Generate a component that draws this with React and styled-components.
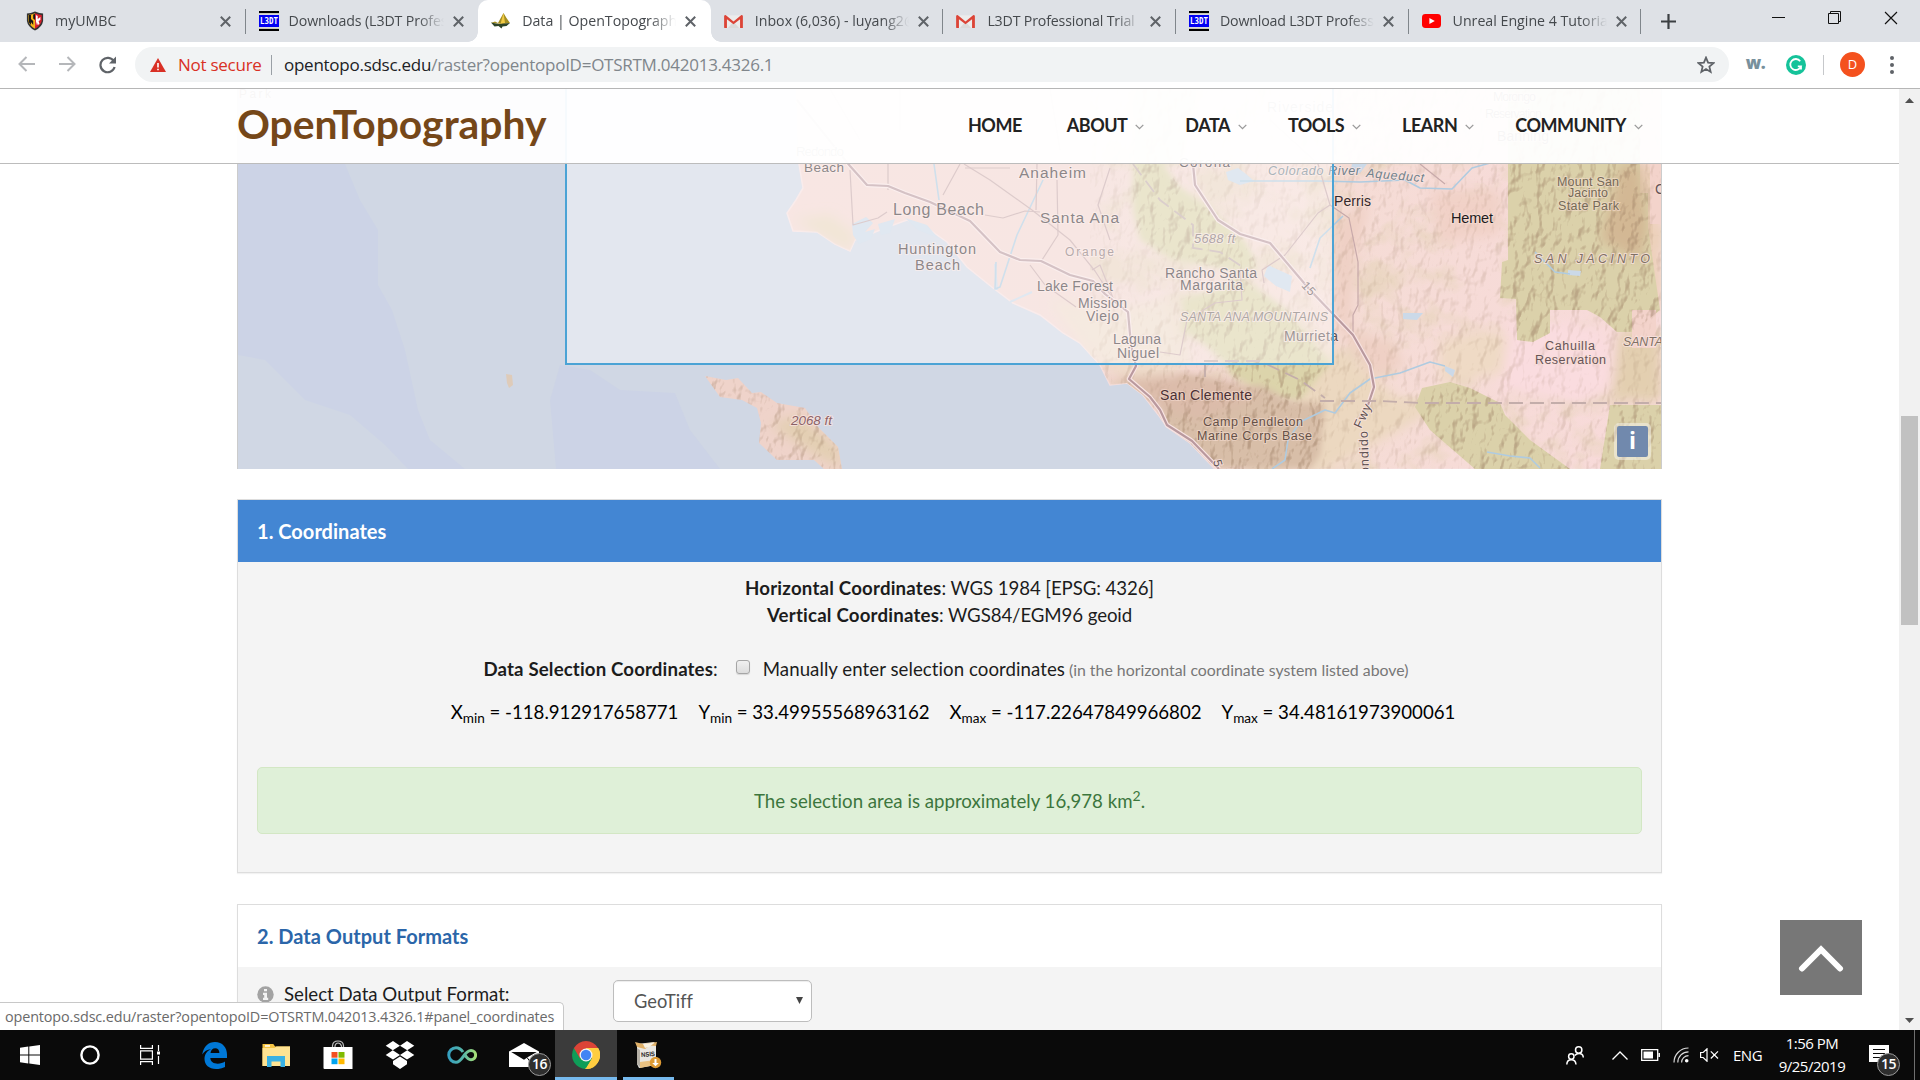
import React from "react";
import styled, { createGlobalStyle, css } from "styled-components";

const ui = '"Open Sans", "Noto Sans", sans-serif';
const lato = 'Lato, "Open Sans", sans-serif';

const GlobalStyle = createGlobalStyle`
  *, *::before, *::after { box-sizing: border-box; }
  body { margin: 0; background: #fff; overflow: hidden; }
  svg { display: block; flex: none; }
`;

const Screen = styled.div`
  display: flex;
  flex-direction: column;
  width: 1920px;
  height: 1080px;
  overflow: hidden;
  font-family: ${ui};
`;

/* ---------- browser tabs ---------- */

const TabStrip = styled.div`
  display: flex;
  height: 42px;
  padding-left: 13px;
  background: #dee1e6;
`;

const flare = css`
  content: "";
  position: absolute;
  bottom: 0;
  width: 10px;
  height: 10px;
`;

const Tab = styled.div`
  position: relative;
  display: flex;
  align-items: center;
  width: 232.6px;
  padding: 0 14.5px 0 13px;
  color: #45494d;
  ${(p) =>
    p.$active &&
    css`
      background: #fff;
      border-radius: 10px 10px 0 0;
      &::before {
        ${flare}
        left: -10px;
        background: radial-gradient(circle at 0 0, transparent 9.5px, #fff 10px);
      }
      &::after {
        ${flare}
        right: -10px;
        background: radial-gradient(circle at 100% 0, transparent 9.5px, #fff 10px);
      }
    `}
`;

const TabDivider = styled.span`
  position: absolute;
  right: 0;
  top: 9px;
  width: 1px;
  height: 25px;
  background: #80868b;
`;

const TabTitle = styled.span`
  flex: 1;
  margin: 0 9px 1px ${(p) => p.$indent || 10}px;
  overflow: hidden;
  white-space: nowrap;
  font-size: 14.2px;
  line-height: 22px;
  letter-spacing: ${(p) => p.$spacing || 0}px;
  mask-image: linear-gradient(to right, #000 calc(100% - 26px), transparent);
`;

const NewTab = styled.div`
  display: flex;
  align-items: center;
  margin-left: 20px;
`;

const WindowControls = styled.div`
  display: flex;
  align-items: flex-start;
  gap: 43px;
  margin-left: auto;
  padding: 11px 22px 0 0;
`;

/* ---------- toolbar ---------- */

const Toolbar = styled.div`
  display: flex;
  align-items: center;
  height: 47px;
  padding: 0 26px 1px 18px;
  background: #fff;
  border-bottom: 1px solid #b6b6b6;
`;

const NavButtons = styled.div`
  display: flex;
  gap: 22px;
  margin-right: 18px;
`;

const AddressBar = styled.div`
  display: flex;
  align-items: center;
  width: 1594px;
  height: 35px;
  padding: 0 14px 0 15px;
  border-radius: 18px;
  background: #f1f3f4;
  font-size: 17px;
  letter-spacing: -0.26px;
  white-space: nowrap;
`;

const NotSecure = styled.span`
  width: 93px;
  margin-left: 12px;
  color: #d93025;
`;

const AddressDivider = styled.span`
  width: 1px;
  height: 20px;
  margin-right: 12px;
  background: #9aa0a6;
`;

const Url = styled.span`
  flex: 1;
  color: #80868b;
  b {
    color: #202124;
    font-weight: 400;
  }
`;

const Extensions = styled.div`
  display: flex;
  align-items: center;
  margin-left: auto;
`;

const WordMark = styled.span`
  margin: -5px 21px 0 0;
  color: #78909c;
  font: 800 17px ${ui};
  letter-spacing: -0.6px;
`;

const GrammarDivider = styled.span`
  width: 1px;
  height: 20px;
  margin: 0 16px 0 17px;
  background: #c6c8cb;
`;

const Avatar = styled.span`
  width: 25px;
  height: 25px;
  margin-right: 25px;
  border-radius: 50%;
  background: #f4511e;
  color: #fff;
  font-size: 13px;
  line-height: 25px;
  text-align: center;
`;

/* ---------- page ---------- */

const Viewport = styled.div`
  position: relative;
  display: flex;
  flex: 1;
  min-height: 0;
`;

const Page = styled.main`
  position: relative;
  flex: 1;
  overflow: hidden;
  background: #fff;
  font-family: ${lato};
  font-variant-ligatures: none;
  color: #1c1c1c;
`;

const SiteHeader = styled.header`
  position: absolute;
  top: 0;
  left: 0;
  right: 0;
  z-index: 2;
  height: 75px;
  border-bottom: 1px solid #bcbcbc;
  background: rgba(255, 255, 255, 0.95);
`;

const HeaderInner = styled.div`
  display: flex;
  align-items: center;
  justify-content: space-between;
  width: 1425px;
  height: 72px;
  margin: 0 auto;
`;

const Logo = styled.span`
  margin-bottom: 2px;
  color: #754719;
  font-size: 40.8px;
  font-weight: 700;
  line-height: 50px;
`;

const Menu = styled.nav`
  display: flex;
  margin-right: 19px;
`;

const MenuItem = styled.span`
  display: flex;
  align-items: center;
  margin-left: ${(p) => p.$before || 41}px;
  color: #222;
  font-size: 18px;
  font-weight: 700;
  line-height: 24px;
  letter-spacing: -0.5px;
  svg {
    margin: 3px 0 0 8px;
  }
`;

const Container = styled.div`
  width: 1425px;
  margin: 0 auto;
`;

const MapFrame = styled.div`
  position: relative;
  height: 380px;
  margin-bottom: 30px;
  border: solid #ccc;
  border-width: 0 1px;
  overflow: hidden;
`;

const InfoButton = styled.span`
  position: absolute;
  right: 10px;
  bottom: 9px;
  width: 37px;
  height: 37px;
  border: 3.5px solid rgba(255, 255, 255, 0.4);
  border-radius: 5px;
  background: #7189ad;
  background-clip: padding-box;
  color: #fff;
  font: 700 23px/28px ${ui};
  text-align: center;
`;

const Panel = styled.section`
  margin-bottom: 31px;
  border: 1px solid #ddd;
  box-shadow: 0 1px 1px rgba(0, 0, 0, 0.05);
  background: #f4f4f4;
`;

const PanelHeader = styled.h2`
  display: flex;
  align-items: center;
  height: 62px;
  margin: 0;
  padding: 0 19px;
  background: ${(p) => (p.$active ? "#4386d3" : "#fff")};
  color: ${(p) => (p.$active ? "#fff" : "#2b66a9")};
  font-size: 20px;
  font-weight: 700;
  letter-spacing: 0.03px;
`;

const CoordinatesBody = styled.div`
  height: 310px;
  padding: 13px 19px 0;
  font-size: 18.67px;
  line-height: 27px;
  text-align: center;
  white-space: nowrap;
`;

const Line = styled.div`
  height: 27px;
  letter-spacing: -0.1px;
`;

const Term = styled.b`
  letter-spacing: ${(p) => p.$spacing}px;
`;

const SelectionLine = styled.label`
  display: flex;
  justify-content: center;
  height: 27px;
  margin: 27px 7px 16px 0;
  letter-spacing: 0.05px;
`;

const Checkbox = styled.span`
  width: 14px;
  height: 14px;
  margin: 4px 13px 0 18px;
  border: 1px solid #a5a5a5;
  border-radius: 3px;
  background: linear-gradient(#f0f0f0, #dcdcdc);
  box-shadow: 0 1px 1px rgba(0, 0, 0, 0.12);
`;

const Hint = styled.small`
  margin-left: 4px;
  color: #777;
  font-size: 15.87px;
  letter-spacing: 0;
`;

const Bounds = styled.div`
  display: flex;
  justify-content: center;
  gap: 20px;
  height: 27px;
  margin: 0 0 41px 7px;
  color: #000;
  letter-spacing: -0.02px;
  sub {
    font-size: 13.6px;
    line-height: 0;
    vertical-align: -3.5px;
  }
`;

const Alert = styled.div`
  height: 67px;
  padding-top: 20px;
  border: 1px solid #d3e7c4;
  border-radius: 5px;
  background: #dff0d8;
  color: #3c763d;
  sup {
    font-size: 14px;
    line-height: 0;
    vertical-align: 7px;
  }
`;

const FormatRow = styled.div`
  display: flex;
  align-items: flex-start;
  height: 80px;
  padding: 13px 0 0 19px;
  font-size: 18.67px;
  svg {
    margin-top: 6px;
  }
`;

const FormatLabel = styled.span`
  width: 329px;
  margin: 1px 0 0 10px;
  line-height: 27px;
`;

const Select = styled.div`
  display: flex;
  align-items: center;
  justify-content: space-between;
  width: 199px;
  height: 42px;
  padding: 0 8px 1px 20px;
  border: 1px solid #bdbdbd;
  border-radius: 5px;
  background: #fff;
  box-shadow: inset 0 1px 1px rgba(0, 0, 0, 0.075);
  color: #555;
  font-size: 18.3px;
  svg {
    margin: 0;
  }
`;

const BackToTop = styled.div`
  position: absolute;
  left: 1780px;
  top: 831px;
  display: flex;
  align-items: center;
  justify-content: center;
  width: 82px;
  height: 75px;
  padding-top: 3px;
  background: #777;
`;

const StatusBubble = styled.div`
  position: absolute;
  left: 0;
  bottom: 0;
  z-index: 3;
  width: 564px;
  height: 28px;
  padding-left: 5px;
  border: solid #c8c8c8;
  border-width: 1px 1px 0 0;
  border-radius: 0 5px 0 0;
  background: #fff;
  color: #6a6a6a;
  font: 14.4px/27px ${ui};
  letter-spacing: -0.13px;
  white-space: nowrap;
`;

const Scrollbar = styled.div`
  display: flex;
  flex-direction: column;
  align-items: center;
  width: 21px;
  padding: 9px 0 7px;
  background: #f1f1f1;
`;

const Thumb = styled.div`
  width: 17px;
  height: 209px;
  margin: 313px 0 auto;
  background: #c1c1c1;
`;

/* ---------- taskbar ---------- */

const Taskbar = styled.footer`
  display: flex;
  height: 50px;
  background: #0a0a0a;
  color: #fff;
`;

const SystemButtons = styled.div`
  display: flex;
  margin-right: 3px;
`;

const TaskButton = styled.div`
  display: flex;
  align-items: center;
  justify-content: center;
  position: relative;
  width: ${(p) => p.$width || 62}px;
  padding-bottom: ${(p) => p.$lift || 0}px;
  background: ${(p) => (p.$active ? "#3b3b3b" : "transparent")};
  &::after {
    content: "";
    display: ${(p) => (p.$running ? "block" : "none")};
    position: absolute;
    bottom: 0;
    left: ${(p) => (p.$active ? 0 : 6)}px;
    right: ${(p) => (p.$active ? 0 : 5)}px;
    height: 3px;
    background: #76b9ed;
  }
`;

const Badge = styled.span`
  position: absolute;
  left: ${(p) => p.$x}px;
  top: ${(p) => p.$y}px;
  width: 23px;
  height: 23px;
  border: 1px solid #9a9a9a;
  border-radius: 50%;
  background: #2e2e2e;
  font-size: 14px;
  font-weight: 600;
  letter-spacing: -0.5px;
  line-height: 20px;
  text-align: center;
`;

const Tray = styled.div`
  display: flex;
  align-items: center;
  width: 354px;
  margin-left: auto;
`;

const TrayIcon = styled.span`
  margin-right: ${(p) => p.$after}px;
`;

const Language = styled.span`
  width: 41px;
  font-size: 15px;
  letter-spacing: -0.5px;
`;

const Clock = styled.span`
  width: 76px;
  margin-right: 19px;
  font-size: 15px;
  line-height: 23.5px;
  letter-spacing: -0.5px;
  text-align: center;
`;

const Notifications = styled.span`
  position: relative;
  align-self: stretch;
  width: 46px;
  padding-top: 15px;
  border-right: 1px solid #6f6f6f;
`;

/* ---------- icons ---------- */

const Cross = ({ size = 11, color = "#5f6368", w = 2 }) => (
  <svg width={size} height={size} viewBox="0 0 11 11" stroke={color} strokeWidth={w} fill="none">
    <path d="M.8.8l9.4 9.4M10.2.8L.8 10.2" />
  </svg>
);

const ShieldIcon = () => (
  <svg width="18" height="20" viewBox="0 0 20 20" preserveAspectRatio="none">
    <path d="M1 2.5Q5 2.5 10 .6 15 2.5 19 2.5V10Q18 16 10 19.6 2 16 1 10Z" fill="#333" />
    <path d="M2.5 4Q6 4 10 2.3V17.8Q4 15 2.5 10Z" fill="#f5b51a" />
    <path d="M10 2.3Q14 4 17.5 4V10Q16 15 10 17.8Z" fill="#d61f2c" />
    <path d="M3 4h2.500v4L8 10v4L5.500 11v3L3 11zM8 3.500v4L10 9V3z" fill="#151515" />
    <path d="M11 4l2 1v3l3-2v3l-2 1 1 3-2 1-1-3-1 4z" fill="#fff" />
  </svg>
);

const L3dtText = styled.text`
  font: 700 9px "DejaVu Sans Mono", monospace;
`;

const L3dtIcon = () => (
  <svg width="20" height="20" viewBox="0 0 20 20">
    <path d="M0 0h20v2H0zM0 18h20v2H0z" fill="#000" />
    <path d="M0 2h20v1.200H0zM0 16.800h20V18H0z" fill="#c9c9b8" />
    <path d="M0 4h20v12H0z" fill="#0202f2" />
    <L3dtText x="1" y="13.4" fill="#fff" textLength="18" lengthAdjust="spacingAndGlyphs">L3DT</L3dtText>
  </svg>
);

const TopoIcon = () => (
  <svg width="20" height="16" viewBox="0 0 20 16">
    <path d="M0 10l4-1.500 3 1.500 5.500-10 3 5 3.500 5-7 1z" fill="#a58f22" />
    <path d="M12.500 0l-3 11 4.500-1z" fill="#f2cb45" />
    <path d="M0 9.500l5 1 3 .5 11-1-3.500 3-4 .5-1 2-3-2.500-4 .5z" fill="#2d4328" />
  </svg>
);

const GmailIcon = () => (
  <svg width="19" height="15" viewBox="0 0 20 16">
    <path d="M1 1.500h18V15H1z" fill="#ececec" />
    <path d="M4 15l6-7 6 7z" fill="#dadada" />
    <path d="M0 2.500Q0 1 1.600 1L10 8l8.400-7Q20 1 20 2.500V15h-3V5.500L10 11 3 5.500V15H1Q0 15 0 14z" fill="#dc4437" />
  </svg>
);

const YoutubeIcon = () => (
  <svg width="19" height="14" viewBox="0 0 19 14">
    <rect width="19" height="14" rx="3.4" fill="#f00" />
    <path d="M7.400 4v6l5.400-3z" fill="#fff" />
  </svg>
);

const ArrowIcon = ({ flip }) => (
  <svg width="18" height="16" viewBox="0 0 18 16" fill="none" stroke="#b5b7ba" strokeWidth="2">
    <path d={flip ? "M1 8h15M9.500 1l7 7-7 7" : "M17 8H2M8.500 1l-7 7 7 7"} />
  </svg>
);

const ReloadIcon = () => (
  <svg width="19" height="18" viewBox="0 0 19 18">
    <path d="M15.800 5.200A7.200 7.200 0 1 0 16.600 11" fill="none" stroke="#5f6368" strokeWidth="2.2" />
    <path d="M18 .5v7h-7z" fill="#5f6368" />
  </svg>
);

const WarningIcon = () => (
  <svg width="16" height="14" viewBox="0 0 16 14">
    <path d="M8 0l8 14H0z" fill="#d93025" />
    <path d="M7.200 5h1.600v4.500H7.200zM7.200 10.700h1.600v1.600H7.200z" fill="#fff" />
  </svg>
);

const StarIcon = () => (
  <svg width="18" height="18" viewBox="0 0 24 24" fill="none" stroke="#5f6368" strokeWidth="2.4">
    <path d="M12 2.200l2.800 6.700 7.200.6-5.500 4.700 1.700 7L12 17.400l-6.200 3.800 1.700-7L2 9.500l7.200-.6z" />
  </svg>
);

const GrammarlyIcon = () => (
  <svg width="20" height="20" viewBox="0 0 20 20">
    <circle cx="10" cy="10" r="10" fill="#15c39a" />
    <path d="M14.200 6.200A5.500 5.500 0 1 0 15 11.300h-3.200M15 11v3.600" fill="none" stroke="#fff" strokeWidth="1.8" />
  </svg>
);

const Chevron = () => (
  <svg width="9" height="6" viewBox="0 0 9 6" fill="none" stroke="#9a9a9a" strokeWidth="1.3">
    <path d="M.7.9l3.800 3.800L8.300.9" />
  </svg>
);

const WindowsIcon = () => (
  <svg width="20" height="20" viewBox="0 0 20 20" fill="#fff">
    <path d="M0 2.700l8.300-1.100v7.800H0zM9.300 1.400L20 0v9.400H9.300zM0 10.500h8.300v7.900L0 17.300zM9.300 10.500H20V20L9.300 18.500z" />
  </svg>
);

const TaskViewIcon = () => (
  <svg width="20" height="20" viewBox="0 0 20 20" fill="none" stroke="#fff" strokeWidth="1.2">
    <path d="M.6 0v3.400h11.800V0M.6 5.800h11.800v8.400H.6zM.6 20v-3.400h11.800V20M18.500 0v6M18.500 11v8" />
    <path d="M17 6.500h3v3h-3z" fill="#fff" stroke="none" />
  </svg>
);

const EdgeIcon = () => (
  <svg width="25" height="27" viewBox="0 0 25 27">
    <path
      d="M.2 12.500C1.500 4.500 6.500 0 13 0c7.500 0 12 5.500 12 12.500V16H8.300c.2 3.800 3.500 5.700 7.400 5.700 2.800 0 5.200-.8 7.300-2.100v5.500A17 17 0 0 1 14 27C7 27 2.500 22.800 2.500 17c0-4.700 2.600-8.300 6.500-9.800C5 7.300 2.200 9.500.2 12.500zM8.500 11h8.900c0-3-1.500-4.700-4.200-4.700-2.600 0-4.300 1.900-4.700 4.700z"
      fill="#0078d7"
      fillRule="evenodd"
    />
  </svg>
);

const ExplorerIcon = () => (
  <svg width="28" height="23" viewBox="0 0 28 23">
    <path d="M.5 0h10.800l1.800 2.500H28V22H.5z" fill="#f5c443" />
    <path d="M.5 4h12l2-1.500H28V22H.5z" fill="#ffe392" />
    <path d="M3 1.200h5v1.500H3z" fill="#fff" />
    <path d="M5 12h18v11h-4.500v-5.500h-9V23H5z" fill="#3ab1e3" />
  </svg>
);

const StoreIcon = () => (
  <svg width="30" height="29" viewBox="0 0 30 29">
    <path d="M9.500 8V5.500Q10 1 15 1t5.500 4.500V8M12 8V6q.5-3 3-3t3.500 3v2" fill="none" stroke="#bbb" strokeWidth="1.2" />
    <path d="M.5 7h29v22h-28Q.5 29 .5 28z" fill="#fff" />
    <path d="M8.500 12h6v5.700h-6z" fill="#f25022" />
    <path d="M15.500 12h6v5.700h-6z" fill="#7fba00" />
    <path d="M8.500 18.500h6v5.700h-6z" fill="#00a4ef" />
    <path d="M15.500 18.500h6v5.700h-6z" fill="#ffb900" />
  </svg>
);

const DropboxIcon = () => (
  <svg width="30" height="28" viewBox="0 0 30 28" fill="#fff">
    <path d="M8 0l7 4.700-7.200 4.600L.7 4.800zM22 0l7.300 4.800-7.100 4.500L15 4.700zM7.800 9.300L15 14l-7 4.500L.7 14zM22.200 9.300l7.100 4.700-7.300 4.500-7-4.500zM15 15.500l7 4.500v3.200L15 28l-7-4.800V20z" />
  </svg>
);

const InfinityIcon = () => (
  <svg width="30" height="18" viewBox="0 0 30 18" fill="none" strokeWidth="3">
    <defs>
      <linearGradient id="loop" x1="0" x2="1">
        <stop offset="0" stopColor="#359fbf" />
        <stop offset=".55" stopColor="#58b7a7" />
        <stop offset="1" stopColor="#a5df77" />
      </linearGradient>
    </defs>
    <path d="M16 6C14 3 12 1.700 9 1.700a7.200 7.200 0 0 0 0 14.500C15.500 16.200 17 4.500 24 4.500a4.600 4.600 0 0 1 0 9.200c-3.500 0-5-3-6-4.700" stroke="url(#loop)" />
  </svg>
);

const MailIcon = () => (
  <svg width="30" height="25" viewBox="0 0 30 25" fill="#fff">
    <path d="M0 8.500L15 0l15 8.500V24H0z" />
    <path d="M2.200 9h25.600L19 14l-4 2.800z" fill="#0a0a0a" />
    <path d="M18 14.500l6 8" stroke="#0a0a0a" />
  </svg>
);

const ChromeIcon = () => (
  <svg width="28" height="28" viewBox="0 0 28 28">
    <path d="M14 14L1.900 7A14 14 0 0 1 26.100 7z" fill="#db4437" />
    <path d="M14 14L14 28A14 14 0 0 1 1.900 7z" fill="#0f9d58" />
    <path d="M14 7h12.100A14 14 0 0 1 13 28l7-11z" fill="#ffcd40" />
    <path d="M14 7L1.900 7 8 17.500z" fill="#db4437" />
    <path d="M20 17.500L14 28l-6-10.500z" fill="#0f9d58" />
    <path d="M20 17.500L13.500 28A14 14 0 0 0 26.100 7H14z" fill="#ffcd40" />
    <circle cx="14" cy="14" r="6.5" fill="#f4f4f4" />
    <circle cx="14" cy="14" r="5.2" fill="#4285f4" />
  </svg>
);

const BoxText = styled.text`
  font: 700 6.5px "Liberation Sans", sans-serif;
`;

const InstallerIcon = () => (
  <svg width="27" height="28" viewBox="0 0 27 28">
    <path d="M2 3l17-2 2 4v19L4 27 2 23z" fill="#e9e7e2" />
    <path d="M0 1l8 2L22 1l-1 4-6-.5L10 8 2 6z" fill="#e0b169" />
    <path d="M8 3l12-1.500L14 6l-4 1z" fill="#f8f2e4" />
    <path d="M2 7l3 2v17l-3-3z" fill="#b5b0a6" />
    <path d="M5 21l15-2v5L5 27z" fill="#e8c182" />
    <BoxText x="6" y="15.5" fill="#252525" transform="rotate(-5 12 14)" textLength="14" lengthAdjust="spacingAndGlyphs">NSIS</BoxText>
    <circle cx="20.5" cy="21.5" r="5.7" fill="#dd9a34" />
    <path d="M19.500 18h2v4h2.300l-3.300 3.300-3.300-3.300h2.300z" fill="#fff" />
  </svg>
);

const PeopleIcon = () => (
  <svg width="18" height="19" viewBox="0 0 18 19" fill="none" stroke="#fff" strokeWidth="1.5">
    <circle cx="12.7" cy="4" r="3.2" />
    <circle cx="5.3" cy="10.5" r="2.7" />
    <path d="M.8 18.500Q1 13.800 5.300 13.800t4.700 4.700M8.800 9.500Q10.500 7.500 13 7.500q4 0 4.300 4" />
  </svg>
);

/* ---------- map ---------- */

const land =
  "M797 89L799 164 803 188 796 200 787 213 793 231 817 232 835 244 850 251 855 240 868 235 885 228 907 220 927 228 947 242 967 267 993 288 1013 303 1040 315 1063 333 1080 343 1100 365 1110 385 1127 383 1143 395 1160 417 1167 427 1190 443 1215 469H1661V89Z";
const catalina =
  "M705 376L726 380 738 378 752 393 761 392 777 403 805 408 818 427 838 447 842 469H824L814 460 777 460 759 443 761 423 757 408 742 400 720 397Z";
const softForests = [
  "M1133 89H1200L1180 164 1163 164 1180 187 1213 210 1247 243 1257 267 1240 272 1213 267 1173 260 1140 240 1133 210Z",
  "M1183 298L1215 290 1238 275 1262 292 1290 312 1330 363 1300 400 1265 396 1230 375 1225 363 1205 345 1182 330Z",
];
const forests = [
  "M1508 89H1640V193H1648V227L1648 227 1660 310 1633 332H1617L1600 317 1587 310H1550V333L1533 342 1517 340 1516 299 1500 298 1502 262 1508 260Z",
  "M1422 388L1450 382 1470 388 1500 403 1505 415 1530 440 1570 469H1475L1430 430 1415 407Z",
  "M1610 405H1661V469H1600Z",
];
const brownHills =
  "M1170 385L1182 374 1212 380 1240 388 1262 385 1290 402 1325 403 1320 455 1310 469H1218L1190 443 1167 425 1160 405Z";

const roads = [
  "M797 100L850 166 867 185 888 186 905 193 930 202 970 221 1000 252 1020 260 1041 261 1070 275 1093 281 1105 294 1128 312 1131 345 1136 366 1129 379 1150 397 1160 410 1167 425 1192 441 1219 469",
  "M1193 164L1195 185 1218 220 1240 234 1270 243 1310 290 1353 335 1370 365 1374 387 1368 405",
];
const minorRoads = [
  "M964 164L990 180 1032 210 1070 240 1095 271 1115 302",
  "M850 170L853 225 878 218 887 212M965 168H1010M960 164L943 195M985 215L1003 218 1025 211 1040 212M1057 180L1058 235 1042 260M1037 164L1036 210M1110 168L1098 205 1110 240M1030 265L1045 285 1076 307",
  "M1318 164L1330 205 1318 213 1285 255 1262 270 1264 283",
  "M1330 205L1349 218 1358 262 1358 305 1353 315V333",
  "M888 164V190M1160 352L1180 355 1187 320 1215 303 1242 300 1240 270M1113 298L1100 265 1092 270",
  "M1420 164L1445 184M1270 120L1318 164M900 89V130M830 89L860 140M1050 89L1060 150",
];
const rivers = [
  "M1240 181H1320L1360 182 1405 180 1420 188 1452 189 1472 168 1490 163",
  "M1272 469L1285 460 1288 440 1300 422 1325 410 1335 413 1350 393 1370 379 1400 373 1430 362 1445 366",
  "M934 164L939 200M1043 180L1017 235 1000 287 995 289 996 262M1343 216L1320 238 1310 268",
  "M1535 252L1555 272 1570 274M1487 452L1510 456 1530 458 1540 468",
];

const water = "#cbd9e8";

const MapText = styled.text`
  font-family: "Liberation Sans", sans-serif;
  font-size: ${(p) => p.$size || 13.5}px;
  font-style: ${(p) => (p.$italic ? "italic" : "normal")};
  fill: ${(p) => p.$fill || "#5e5152"};
  stroke: ${(p) => p.$halo || "rgba(250,228,225,.75)"};
  stroke-width: 2px;
  paint-order: stroke;
`;

const insideLabels = [
  [804, 172, 40, "Beach", 13.5],
  [1019, 178, 67, "Anaheim", 15.5],
  [893, 215, 91, "Long Beach", 16],
  [1040, 223, 79, "Santa Ana", 15.5],
  [898, 254, 78, "Huntington", 14.5],
  [915, 270, 45, "Beach", 14.5],
  [1165, 278, 92, "Rancho Santa", 14],
  [1180, 290, 63, "Margarita", 14],
  [1037, 291, 76, "Lake Forest", 14],
  [1078, 308, 49, "Mission", 14],
  [1086, 321, 33, "Viejo", 14],
  [1113, 344, 48, "Laguna", 14],
  [1117, 358, 42, "Niguel", 14],
  [1179, 167, 51, "Corona", 13.5],
  [796, 156, 48, "Redondo", 13.5],
  [1267, 112, 66, "Riverside", 14],
];
const outsideLabels = [
  [1334, 206, 37, "Perris", 14, "#33282b"],
  [1451, 223, 42, "Hemet", 14.5, "#211b1d"],
  [1160, 400, 92, "San Clemente", 14, "#4a3034"],
  [1203, 426, 100, "Camp Pendleton", 12.5, "#655147"],
  [1197, 440, 115, "Marine Corps Base", 12.5, "#655147"],
  [1557, 186, 62, "Mount San", 12.5, "#756a57"],
  [1568, 197, 40, "Jacinto", 12.5, "#756a57"],
  [1558, 210, 61, "State Park", 12.5, "#756a57"],
  [1545, 350, 50, "Cahuilla", 12.5, "#665457"],
  [1535, 364, 71, "Reservation", 12.5, "#665457"],
  [1493, 101, 43, "Morongo", 12.5, "#665457"],
  [1485, 118, 57, "Reservation", 12.5, "#665457"],
  [1497, 141, 52, "Banning", 14, "#665457"],
  [1655, 194, 12, "C", 14, "#665457"],
  [239, 98, 32, "Park", 12, "#665457"],
];

const TerrainMap = () => (
  <svg width="1423" height="380" viewBox="238 89 1423 380">
    <defs>
      <clipPath id="landClip"><path d={land + catalina} /></clipPath>
      <clipPath id="hillClip"><path d={softForests.join("") + forests.join("") + catalina + brownHills} /></clipPath>
      <linearGradient id="landTone" x1="0" x2="1">
        <stop offset="0" stopColor="#f3d6d0" />
        <stop offset=".35" stopColor="#f2d6d0" />
        <stop offset=".62" stopColor="#f5dcd5" />
        <stop offset="1" stopColor="#f8dada" />
      </linearGradient>
      <filter id="soft" x="-10%" y="-10%" width="120%" height="120%"><feGaussianBlur stdDeviation="6" /></filter>
      <filter id="edge" x="-5%" y="-5%" width="110%" height="110%"><feGaussianBlur stdDeviation="3" /></filter>
      <filter id="relief" x="0" y="0" width="100%" height="100%" colorInterpolationFilters="sRGB">
        <feTurbulence type="fractalNoise" baseFrequency=".085 .05" numOctaves="3" seed="8" />
        <feColorMatrix values="0 0 0 0 0 0 0 0 0 0 0 0 0 0 0 1 0 0 0 0" />
        <feDiffuseLighting surfaceScale="7" lightingColor="#fff">
          <feDistantLight azimuth="225" elevation="52" />
        </feDiffuseLighting>
        <feColorMatrix values="0 0 0 0 .6 0 0 0 0 .48 0 0 0 0 .38 -1.6 0 0 0 1.1" />
      </filter>
      <filter id="patches" x="0" y="0" width="100%" height="100%" colorInterpolationFilters="sRGB">
        <feTurbulence type="fractalNoise" baseFrequency=".02 .024" numOctaves="4" seed="21" />
        <feColorMatrix values="0 0 0 0 .88 0 0 0 0 .82 0 0 0 0 .69 4 0 0 0 -1.9" />
      </filter>
    </defs>

    <rect x="238" y="89" width="1423" height="380" fill="#d0d7e4" />
    <path d="M238 89H335L345 164 360 200 378 230V285L392 310 405 350 418 410 430 440 465 469H408L385 445 350 415 305 400 265 360 238 355Z" fill="#ccd3e6" />
    <path d="M560 365L590 370 620 390 675 393 690 430 720 469H556L550 400Z" fill="#ccd3e6" />
    <path d={land} fill="url(#landTone)" stroke="#f6dfdf" strokeWidth="1.5" />
    <path d={catalina} fill="#efd3ca" />
    <path d="M506 374l6 1 1 10-4 3-2-5z" fill="#decbb9" />

    <g clipPath="url(#landClip)">
      <rect x="1090" y="89" width="571" height="380" filter="url(#patches)" opacity=".5" />
      <g filter="url(#soft)">
        <path d="M1430 190H1500V235L1440 243Z" fill="#f1d1c7" />
        <path d="M1334 225L1370 200 1355 260 1350 330 1390 340 1405 365 1375 378 1335 325Z" fill="#efd0c5" />
        <path d="M1050 300L1110 310 1170 300 1190 360 1150 400 1090 355Z" fill="#efdccb" />
        <path d="M1330 345L1360 365 1400 400 1450 400 1400 430 1330 469H1300V380Z" fill="#ecd8c0" />
        <path d="M1440 340L1500 330 1520 370 1440 385Z" fill="#efdac5" />
        <path d="M1510 320L1600 325 1620 385 1580 405 1500 390Z" fill="#fadcdf" />
        <path d="M1620 330H1661V400H1610Z" fill="#e3cfb0" />
        <path d="M1640 164H1661V310H1645Z" fill="#ecd0b9" />
        <path d="M795 220L830 215 855 235 850 251Z" fill="#e8d6bb" />
      </g>
      {softForests.map((d) => <path key={d} d={d} fill="#dcd4ab" filter="url(#edge)" />)}
      {forests.map((d) => <path key={d} d={d} fill="#dbd1aa" />)}
      <path d={brownHills} fill="#d8bea8" filter="url(#edge)" />
      <path d="M1110 380L1170 375 1230 382 1260 396 1200 420 1165 410Z" fill="#dcbcaa" filter="url(#soft)" />
      <path d="M1600 240L1620 165 1640 164 1648 230 1640 262Z" fill="#d3b894" filter="url(#soft)" />
      <path d="M1650 164h11v60h-11zM1632 310h24v38h-24z" fill="#f3d3cb" />
      <path d="M770 425L800 415 838 447 842 469 815 455z" fill="#e3cfb2" filter="url(#soft)" />
      <g opacity=".19"><rect x="1090" y="89" width="571" height="380" filter="url(#relief)" /></g>
    </g>
    <g clipPath="url(#hillClip)">
      <g opacity=".34"><rect x="690" y="89" width="971" height="380" filter="url(#relief)" /></g>
    </g>

    <g fill={water}>
      <path d="M1226 172l12-4 8 6 8 7-14 4-12-5zM1268 265l24 11-2 16-14-6-12-10zM1352 164h15l-7 9h-10zM1403 313h20l-6 7-14-1zM1445 366l10 4-2 7-8-6zM1568 270l13 1-1 5-12-1z" />
      <path d="M852 224l14-7 7 6-8 9 10-3-4 10-12 5-6-9zM878 224l17-5-5 14-9 2zM905 218l22 7 11 13-20-8z" />
      <path d="M997 290L995 264M1010 302L1032 292" stroke={water} strokeWidth="2" />
    </g>
    <g fill="none" stroke="#afcbe0" strokeWidth="1.6" strokeLinejoin="round">
      {rivers.map((d) => <path key={d} d={d} />)}
    </g>
    <g fill="none" stroke="#c7a9aa" strokeWidth="1.2" strokeLinejoin="round">
      {minorRoads.map((d) => <path key={d} d={d} />)}
    </g>
    <g fill="none" strokeLinejoin="round">
      {roads.map((d) => <path key={d} d={d} stroke="#f8e4e3" strokeWidth="4.5" />)}
      {roads.map((d) => <path key={d} d={d} stroke="#b9999e" strokeWidth="2.2" />)}
    </g>
    <path d="M1133 164L1160 200 1193 225V248L1220 252 1247 270M1204 361H1260L1300 380 1325 398M1320 401H1380L1420 403H1661M1205 363V380" fill="none" stroke="#c3adaa" strokeWidth="1.8" strokeDasharray="14 7" />

    {insideLabels.map(([x, y, w, t, s]) => (
      <MapText key={t + y} x={x} y={y} textLength={w} $size={s} $fill="#40363a">{t}</MapText>
    ))}
    <MapText x="1065" y="256" textLength="49" $size={12} $fill="#867272">Orange</MapText>
    <MapText x="1194" y="243" textLength="41" $size={13} $italic $fill="#7b6d6c">5688 ft</MapText>
    <MapText x="1180" y="321" textLength="148" $size={12.5} $italic $fill="#796f6a">SANTA ANA MOUNTAINS</MapText>
    <MapText x="1284" y="341" textLength="54" $size={14}>Murrieta</MapText>
    <MapText x="1268" y="175" textLength="92" $size={12.5} $italic $fill="#71818b">Colorado River</MapText>
    <MapText transform="translate(1366 177) rotate(5)" textLength="58" $size={12.5} $italic $fill="#71818b">Aqueduct</MapText>
    <MapText transform="translate(1301 286) rotate(48)" textLength="14" $size={12}>15</MapText>

    <path d="M566 80H1333V364H566Z" fill="rgba(255,255,255,.4)" stroke="#4ba3d5" strokeWidth="2" />

    {outsideLabels.map(([x, y, w, t, s, f]) => (
      <MapText key={t + y} x={x} y={y} textLength={w} $size={s} $fill={f} $halo="rgba(250,225,215,.5)">{t}</MapText>
    ))}
    <MapText x="1534" y="263" textLength="116" $size={12.5} $italic $fill="#807165">SAN JACINTO</MapText>
    <MapText x="1623" y="346" textLength="40" $size={12.5} $italic $fill="#807165">SANTA</MapText>
    <MapText x="791" y="425" textLength="41" $size={13.5} $italic $fill="#8b6267">2068 ft</MapText>
    <MapText transform="translate(1369 474) rotate(-92)" textLength="43" $size={12.5}>ondido</MapText>
    <MapText transform="translate(1361 429) rotate(-65)" textLength="25" $size={12.5}>Fwy</MapText>
    <MapText transform="translate(1213 461) rotate(75)" $size={12}>5</MapText>
  </svg>
);

/* ---------- screen ---------- */

const tabs = [
  { title: "myUMBC", icon: <ShieldIcon />, divider: true, indent: 11 },
  { title: "Downloads (L3DT Professional)", icon: <L3dtIcon />, spacing: -0.12 },
  { title: "Data | OpenTopography", icon: <TopoIcon />, active: true, indent: 11 },
  { title: "Inbox (6,036) - luyang2@umbc", icon: <GmailIcon />, divider: true, indent: 12 },
  { title: "L3DT Professional Trial", icon: <GmailIcon />, divider: true, spacing: -0.17, indent: 12 },
  { title: "Download L3DT Professional", icon: <L3dtIcon />, divider: true, spacing: -0.17, indent: 11 },
  { title: "Unreal Engine 4 Tutorial", icon: <YoutubeIcon />, divider: true, indent: 12 },
];

const menu = [
  { label: "HOME", before: 0 },
  { label: "ABOUT", before: 45, more: true },
  { label: "DATA", more: true },
  { label: "TOOLS", more: true },
  { label: "LEARN", more: true },
  { label: "COMMUNITY", more: true },
];

const bounds = [
  ["X", "min", "-118.912917658771"],
  ["Y", "min", "33.49955568963162"],
  ["X", "max", "-117.22647849966802"],
  ["Y", "max", "34.48161973900061"],
];

const apps = [
  { name: "edge", icon: <EdgeIcon /> },
  { name: "explorer", icon: <ExplorerIcon /> },
  { name: "store", icon: <StoreIcon />, lift: 2 },
  { name: "dropbox", icon: <DropboxIcon /> },
  { name: "infinity", icon: <InfinityIcon /> },
  { name: "mail", icon: <MailIcon />, badge: "16" },
  { name: "chrome", icon: <ChromeIcon />, active: true, running: true },
  { name: "installer", icon: <InstallerIcon />, running: true, lift: 1 },
];

export default function App() {
  return (
    <Screen>
      <GlobalStyle />
      <TabStrip>
        {tabs.map((t) => (
          <Tab key={t.title} $active={t.active}>
            {t.icon}
            <TabTitle $spacing={t.spacing} $indent={t.indent}>{t.title}</TabTitle>
            <Cross />
            {t.divider && <TabDivider />}
          </Tab>
        ))}
        <NewTab>
          <svg width="15" height="15" viewBox="0 0 15 15" stroke="#3c4043" strokeWidth="2.2"><path d="M7.500 0v15M0 7.500h15" /></svg>
        </NewTab>
        <WindowControls>
          <svg width="13" height="13" viewBox="0 0 13 13" stroke="#111"><path d="M0 6.500h13" /></svg>
          <svg width="13" height="13" viewBox="0 0 13 13" stroke="#111" fill="none"><path d="M.5 2.500h10v10H.5zM2.500 2.500V.5h10v10h-2" /></svg>
          <Cross size={14} color="#111" w={0.9} />
        </WindowControls>
      </TabStrip>

      <Toolbar>
        <NavButtons>
          <ArrowIcon />
          <ArrowIcon flip />
          <ReloadIcon />
        </NavButtons>
        <AddressBar>
          <WarningIcon />
          <NotSecure>Not secure</NotSecure>
          <AddressDivider />
          <Url><b>opentopo.sdsc.edu</b>/raster?opentopoID=OTSRTM.042013.4326.1</Url>
          <StarIcon />
        </AddressBar>
        <Extensions>
          <WordMark>w.</WordMark>
          <GrammarlyIcon />
          <GrammarDivider />
          <Avatar>D</Avatar>
          <svg width="4" height="18" viewBox="0 0 4 18" fill="#5f6368"><circle cx="2" cy="2" r="2" /><circle cx="2" cy="9" r="2" /><circle cx="2" cy="16" r="2" /></svg>
        </Extensions>
      </Toolbar>

      <Viewport>
        <Page>
          <SiteHeader>
            <HeaderInner>
              <Logo>OpenTopography</Logo>
              <Menu>
                {menu.map((m) => (
                  <MenuItem key={m.label} $before={m.before}>{m.label}{m.more && <Chevron />}</MenuItem>
                ))}
              </Menu>
            </HeaderInner>
          </SiteHeader>

          <Container>
            <MapFrame>
              <TerrainMap />
              <InfoButton>i</InfoButton>
            </MapFrame>

            <Panel>
              <PanelHeader $active>1. Coordinates</PanelHeader>
              <CoordinatesBody>
                <Line><Term $spacing={0.2}>Horizontal Coordinates</Term>: WGS 1984 [EPSG: 4326]</Line>
                <Line><Term $spacing={0.2}>Vertical Coordinates</Term>: WGS84/EGM96 geoid</Line>
                <SelectionLine>
                  <Term $spacing={0.14}>Data Selection Coordinates</Term>:
                  <Checkbox />
                  Manually enter selection coordinates
                  <Hint>(in the horizontal coordinate system listed above)</Hint>
                </SelectionLine>
                <Bounds>
                  {bounds.map(([axis, end, value]) => (
                    <span key={axis + end}>{axis}<sub>{end}</sub> = {value}</span>
                  ))}
                </Bounds>
                <Alert>The selection area is approximately 16,978 km<sup>2</sup>.</Alert>
              </CoordinatesBody>
            </Panel>

            <Panel>
              <PanelHeader>2. Data Output Formats</PanelHeader>
              <FormatRow>
                <svg width="17" height="17" viewBox="0 0 17 17"><circle cx="8.5" cy="8.5" r="8.2" fill="#a3a3a3" /><path d="M7 3h3v2.300H7zM6 6.800h4v5h1.200V14H6v-2.200h1.200V9H6z" fill="#f4f4f4" /></svg>
                <FormatLabel>Select Data Output Format:</FormatLabel>
                <Select>
                  GeoTiff
                  <svg width="7" height="7" viewBox="0 0 7 7"><path d="M0 0h7L3.500 7z" fill="#444" /></svg>
                </Select>
              </FormatRow>
            </Panel>
          </Container>

          <BackToTop>
            <svg width="46" height="28" viewBox="0 0 46 28" fill="none" stroke="#fff" strokeWidth="6" strokeLinecap="round"><path d="M4 23.500L23 4.500l19 19" /></svg>
          </BackToTop>
          <StatusBubble>opentopo.sdsc.edu/raster?opentopoID=OTSRTM.042013.4326.1#panel_coordinates</StatusBubble>
        </Page>
        <Scrollbar>
          <svg width="9" height="5" viewBox="0 0 9 5"><path d="M0 5h9L4.500 0z" fill="#505050" /></svg>
          <Thumb />
          <svg width="9" height="5" viewBox="0 0 9 5"><path d="M0 0h9L4.500 5z" fill="#505050" /></svg>
        </Scrollbar>
      </Viewport>

      <Taskbar>
        <SystemButtons>
          <TaskButton $width={60}><WindowsIcon /></TaskButton>
          <TaskButton $width={60}>
            <svg width="20" height="20" viewBox="0 0 20 20"><circle cx="10" cy="10" r="8.6" fill="none" stroke="#fff" strokeWidth="2.4" /></svg>
          </TaskButton>
          <TaskButton $width={60}><TaskViewIcon /></TaskButton>
        </SystemButtons>
        {apps.map((a) => (
          <TaskButton key={a.name} $active={a.active} $running={a.running} $lift={a.lift}>
            {a.icon}
            {a.badge && <Badge $x={35} $y={23}>{a.badge}</Badge>}
          </TaskButton>
        ))}
        <Tray>
          <TrayIcon $after={28}><PeopleIcon /></TrayIcon>
          <TrayIcon $after={13}>
            <svg width="16" height="9" viewBox="0 0 16 9" fill="none" stroke="#fff" strokeWidth="1.3"><path d="M.5 8.500L8 1l7.500 7.500" /></svg>
          </TrayIcon>
          <TrayIcon $after={13}>
            <svg width="19" height="12" viewBox="0 0 19 12" fill="none" stroke="#fff"><path d="M.7.7h16v10.600H.7zM18.300 4v4" strokeWidth="1.3" /><path d="M2.500 2.500h9.500v7H2.500z" fill="#fff" stroke="none" /></svg>
          </TrayIcon>
          <TrayIcon $after={11}>
            <svg width="16" height="16" viewBox="0 0 16 16" fill="none" stroke="#fff" strokeWidth="1.2"><path d="M1 15.500A14.500 14.500 0 0 1 15.500 1M4.800 15.500A10.700 10.700 0 0 1 15.500 4.800M8.600 15.500a6.900 6.900 0 0 1 6.900-6.900" opacity=".85" /><circle cx="13.7" cy="13.7" r="1.8" fill="#fff" stroke="none" /></svg>
          </TrayIcon>
          <TrayIcon $after={14}>
            <svg width="19" height="14" viewBox="0 0 19 14" fill="none" stroke="#fff" strokeWidth="1.2"><path d="M.6 4.500h2.600L7 .8v12.400L3.200 9.500H.6zM10.800 3.300l7.200 7.200M18 3.300l-7.200 7.200" /></svg>
          </TrayIcon>
          <Language>ENG</Language>
          <Clock>1:56 PM<br />9/25/2019</Clock>
          <Notifications>
            <svg width="20" height="20" viewBox="0 0 20 20"><path d="M0 0h20v17h-5l-4 3v-3H0z" fill="#fff" /><path d="M4 4.500h12M4 8.500h12M4 12.500h8" stroke="#0a0a0a" strokeWidth="1.2" /></svg>
            <Badge $x={8} $y={23}>15</Badge>
          </Notifications>
        </Tray>
      </Taskbar>
    </Screen>
  );
}
